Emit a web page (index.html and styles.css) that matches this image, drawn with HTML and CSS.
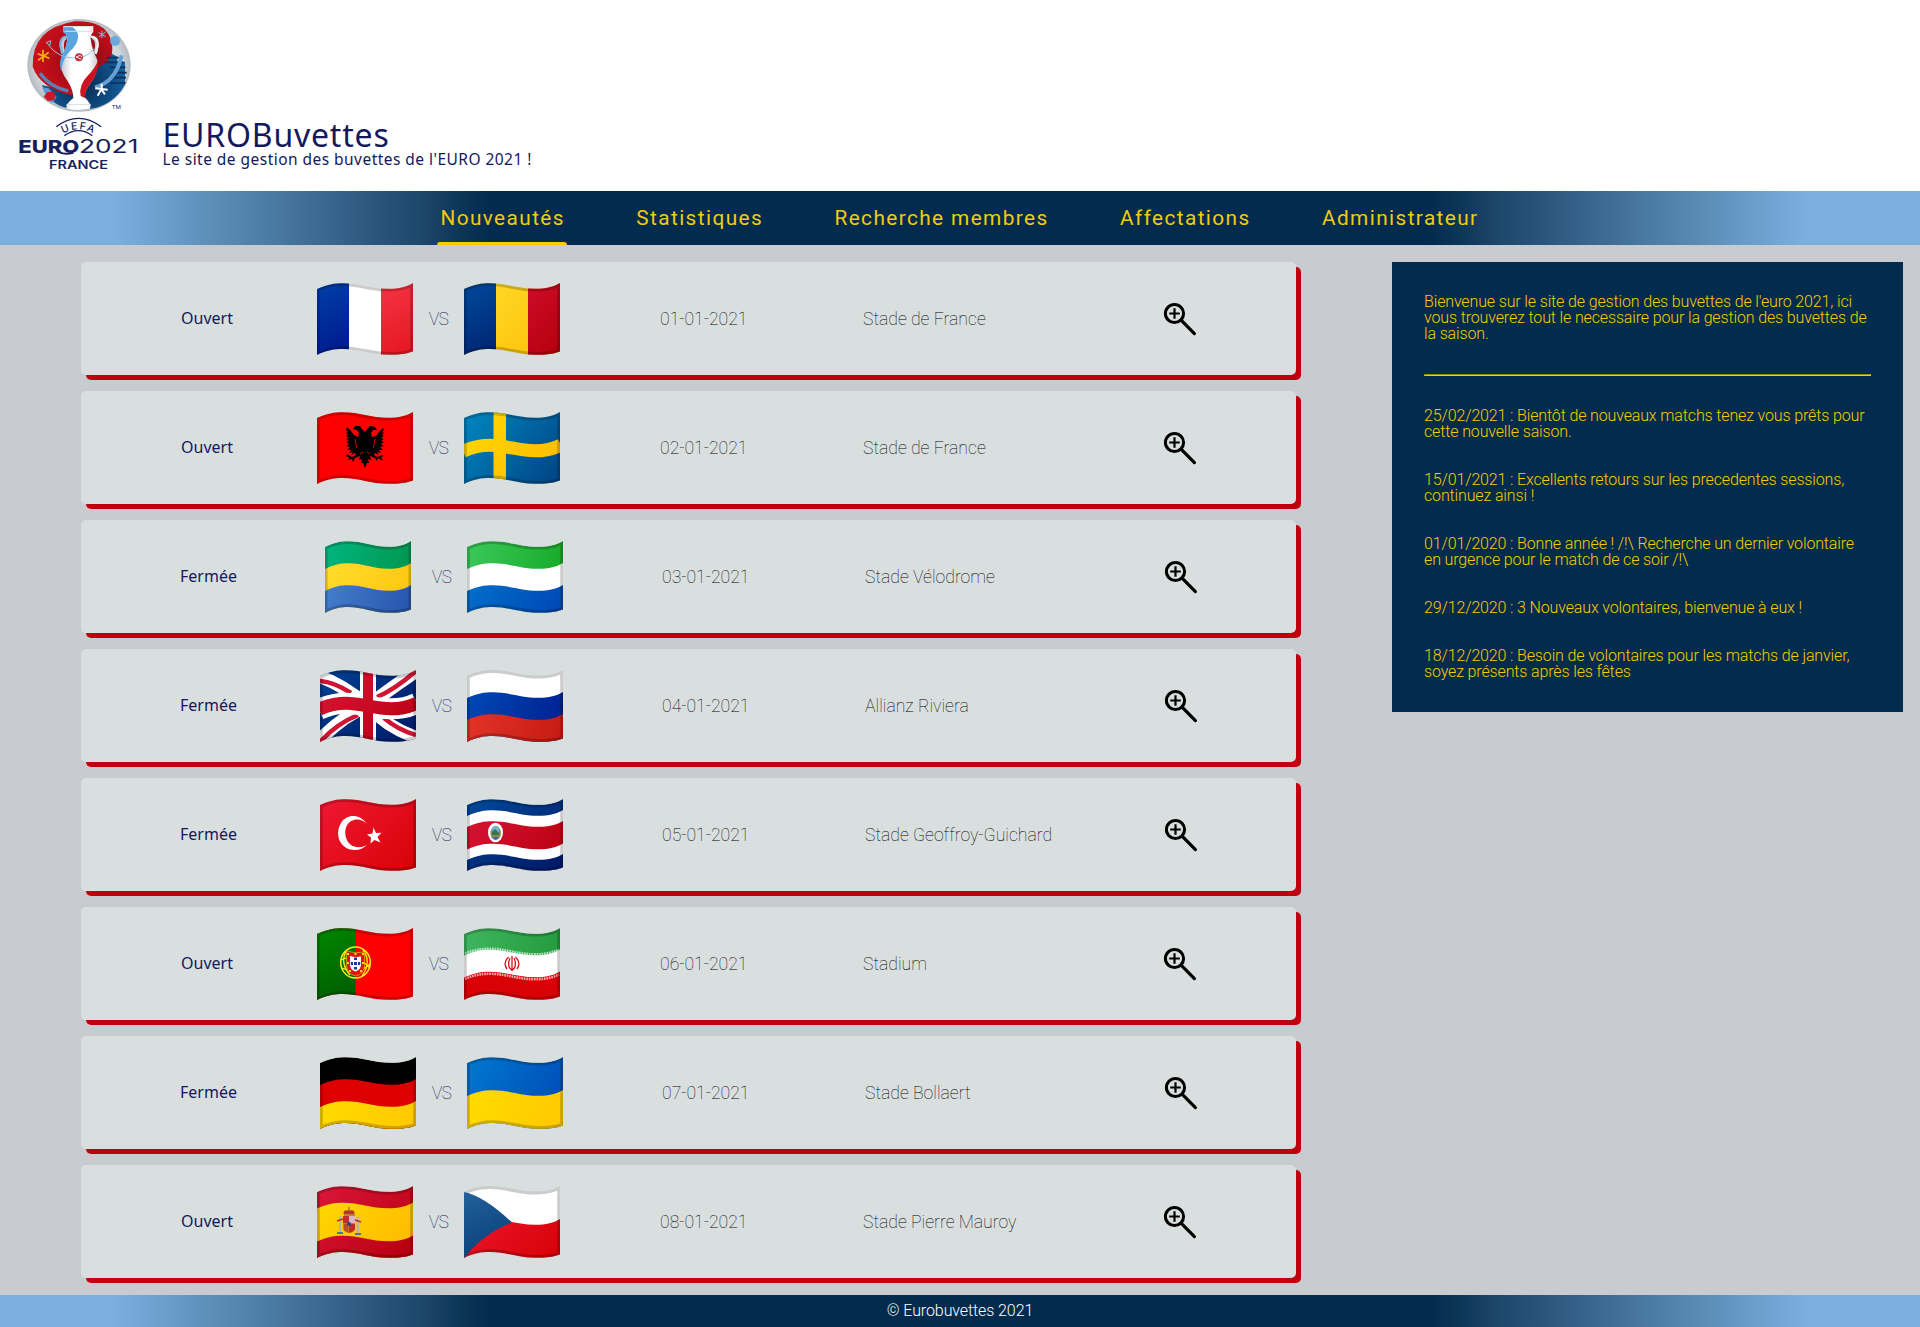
FILE: index.html
```html
<!DOCTYPE html>
<html lang="fr">
<head>
<meta charset="utf-8">
<title>EUROBuvettes</title>
<link rel="stylesheet" href="styles.css">
</head>
<body>
<svg class="defs" width="0" height="0" aria-hidden="true">
  <defs>
    <path id="wave" d="M0 6C10 1.5 17 .3 26 .3C42 .3 54 5.8 71 5.8C82 5.8 90 3.6 96 0V90H0Z"/>
    <path id="sheet" d="M0 6C10 1.5 17 .3 26 .3C42 .3 54 5.8 71 5.8C82 5.8 90 3.6 96 0V68.5C90 71 82 71.8 71 71.8C54 71.8 42 66 26 66C17 66 10 67 0 72Z"/>
    <clipPath id="cut"><use href="#sheet"/></clipPath>
    <use id="edge" href="#sheet" fill="none" stroke="#000" stroke-opacity=".2" stroke-width="5.6"/>
    <linearGradient id="navy" gradientUnits="userSpaceOnUse" x1="10" y1="0" x2="86" y2="72"><stop stop-color="#003f8f"/><stop offset="1" stop-color="#001b69"/></linearGradient>
    <linearGradient id="navyL" gradientUnits="userSpaceOnUse" x1="0" y1="0" x2="40" y2="72"><stop stop-color="#004a9c"/><stop offset="1" stop-color="#00216f"/></linearGradient>
    <linearGradient id="royal" gradientUnits="userSpaceOnUse" x1="0" y1="0" x2="40" y2="72"><stop stop-color="#0040a8"/><stop offset="1" stop-color="#001489"/></linearGradient>
    <linearGradient id="rusBlue" gradientUnits="userSpaceOnUse" x1="0" y1="10" x2="96" y2="60"><stop stop-color="#004cb8"/><stop offset="1" stop-color="#001e90"/></linearGradient>
    <linearGradient id="azure" gradientUnits="userSpaceOnUse" x1="0" y1="0" x2="96" y2="60"><stop stop-color="#0079d0"/><stop offset="1" stop-color="#0049b5"/></linearGradient>
    <linearGradient id="sweBlue" gradientUnits="userSpaceOnUse" x1="0" y1="0" x2="90" y2="72"><stop stop-color="#0087c1"/><stop offset="1" stop-color="#004585"/></linearGradient>
    <linearGradient id="gabBlue" gradientUnits="userSpaceOnUse" x1="0" y1="40" x2="96" y2="72"><stop stop-color="#447fcd"/><stop offset="1" stop-color="#2754ad"/></linearGradient>
    <linearGradient id="czBlue" gradientUnits="userSpaceOnUse" x1="0" y1="6" x2="30" y2="72"><stop stop-color="#22629c"/><stop offset="1" stop-color="#083d77"/></linearGradient>
    <linearGradient id="coral" gradientUnits="userSpaceOnUse" x1="60" y1="0" x2="96" y2="72"><stop stop-color="#f53547"/><stop offset="1" stop-color="#e41620"/></linearGradient>
    <linearGradient id="crimson" gradientUnits="userSpaceOnUse" x1="10" y1="0" x2="86" y2="72"><stop stop-color="#d91536"/><stop offset="1" stop-color="#b80010"/></linearGradient>
    <linearGradient id="scarlet" gradientUnits="userSpaceOnUse" x1="10" y1="0" x2="86" y2="72"><stop stop-color="#ee1730"/><stop offset="1" stop-color="#d80309"/></linearGradient>
    <linearGradient id="brick" gradientUnits="userSpaceOnUse" x1="0" y1="40" x2="96" y2="72"><stop stop-color="#e33428"/><stop offset="1" stop-color="#c51a12"/></linearGradient>
    <linearGradient id="gold" gradientUnits="userSpaceOnUse" x1="10" y1="0" x2="86" y2="72"><stop stop-color="#ffdc29"/><stop offset="1" stop-color="#fdc00a"/></linearGradient>
    <linearGradient id="lemon" gradientUnits="userSpaceOnUse" x1="0" y1="30" x2="96" y2="72"><stop stop-color="#ffdc00"/><stop offset="1" stop-color="#ffc800"/></linearGradient>
    <linearGradient id="amber" gradientUnits="userSpaceOnUse" x1="10" y1="0" x2="86" y2="72"><stop stop-color="#ffd900"/><stop offset="1" stop-color="#ffb900"/></linearGradient>
    <linearGradient id="jade" gradientUnits="userSpaceOnUse" x1="0" y1="0" x2="96" y2="30"><stop stop-color="#00b680"/><stop offset="1" stop-color="#00964f"/></linearGradient>
    <linearGradient id="lime" gradientUnits="userSpaceOnUse" x1="0" y1="0" x2="96" y2="30"><stop stop-color="#3bc95b"/><stop offset="1" stop-color="#17aa28"/></linearGradient>
    <linearGradient id="iranGreen" gradientUnits="userSpaceOnUse" x1="0" y1="0" x2="96" y2="30"><stop stop-color="#40b661"/><stop offset="1" stop-color="#239a3b"/></linearGradient>
    <linearGradient id="forest" gradientUnits="userSpaceOnUse" x1="0" y1="0" x2="40" y2="72"><stop stop-color="#008800"/><stop offset="1" stop-color="#005a00"/></linearGradient>
    <symbol id="loupe" viewBox="0 0 34 34">
      <circle cx="11.5" cy="11.5" r="9.1" fill="none" stroke="#000" stroke-width="3"/>
      <path d="M11.5 6.2V16.8M6.2 11.5H16.8" stroke="#000" stroke-width="2.2" fill="none"/>
      <path d="M18.6 18.6L31.4 31.6" stroke="#000" stroke-width="3.2" stroke-linecap="round" fill="none"/>
    </symbol>
  </defs>
</svg>

<header class="banner">
  <svg class="logo" viewBox="0 0 420 510" role="img" aria-label="UEFA EURO 2021 France">
    <defs>
      <radialGradient id="rim"><stop offset=".8" stop-color="#d3d8dd"/><stop offset="1" stop-color="#b4bbc1"/></radialGradient>
      <linearGradient id="cup"><stop stop-color="#bfc5cb"/><stop offset=".3" stop-color="#fff"/><stop offset=".75" stop-color="#fff"/><stop offset="1" stop-color="#c9cdd2"/></linearGradient>
      <radialGradient id="sea" gradientUnits="userSpaceOnUse" cx="215" cy="220" r="150"><stop stop-color="#0c2448"/><stop offset=".55" stop-color="#0e4a80"/><stop offset="1" stop-color="#1768a8"/></radialGradient>
      <radialGradient id="wine" gradientUnits="userSpaceOnUse" cx="215" cy="150" r="150"><stop stop-color="#6b0d16"/><stop offset=".55" stop-color="#b30d17"/><stop offset="1" stop-color="#cd111b"/></radialGradient>
      <clipPath id="ball"><ellipse cx="207" cy="166" rx="152" ry="136"/></clipPath>
      <path id="arc" d="M150 377Q206 340 262 377"/>
    </defs>
    <ellipse cx="207" cy="166" rx="155" ry="139" fill="url(#rim)"/>
    <g clip-path="url(#ball)">
      <path d="M95 225L185 245L250 170L300 128L322 140V155H345V240Q310 292 215 300Q150 298 122 268Z" fill="url(#sea)"/>
      <path d="M68 170Q64 55 195 34Q280 32 300 82Q318 130 290 158Q262 170 250 185L185 256Q92 236 68 170Z" fill="url(#wine)"/>
      <path d="M290 143H326M284 157H340M300 172H346M305 188H350M290 203H348M300 219H350" stroke="#0d2f58" stroke-width="5"/>
      <path d="M335 136Q318 215 255 232" fill="none" stroke="#659fd3" stroke-width="12"/>
      <path d="M90 190Q120 232 175 243" fill="none" stroke="#5c80b6" stroke-width="10"/>
      <path d="M96 232Q108 262 125 280L140 262L116 235Z" fill="#5b9bd6"/>
    </g>
    <path d="M108 98L122 92L120 106Z" fill="none" stroke="#8fb9df" stroke-width="3"/>
    <circle cx="315" cy="93" r="15" fill="#6aa8de"/>
    <path d="M101 260L112 246L129 245L138 256L132 270L114 274Z" fill="#c81a22"/>
    <path d="M168 82Q150 92 160 128M248 82Q268 92 256 128" fill="none" stroke="#c5cdd4" stroke-width="10"/>
    <path d="M160 48H250V66Q242 72 242 86Q245 115 262 150Q266 190 240 222Q222 246 224 262Q234 272 242 285L240 296Q207 304 170 296L169 285Q178 273 190 264Q190 240 174 215Q144 178 154 142Q168 120 172 88Q172 74 160 66Z" fill="url(#cup)"/>
    <path d="M160 50H186Q208 65 204 84Q200 108 178 125Q157 148 154 185Q146 160 154 142Q168 120 172 88Q172 74 160 66Z" fill="#5aa5df"/>
    <path d="M265 150Q267 190 240 222Q222 246 226 265L212 258Q205 225 235 195Q253 178 265 150Z" fill="#cc1420"/>
    <path d="M172 80Q151 80 151 106L157 132" fill="none" stroke="#77b3e3" stroke-width="7"/>
    <path d="M243 80Q264 80 263 106L257 132" fill="none" stroke="#eceff2" stroke-width="7"/>
    <path d="M162 50H249M164 64H246M170 284H242" stroke="#d7dde2" stroke-width="3"/>
    <path d="M116 106Q145 145 197 144Q235 142 252 116" fill="none" stroke="#8fc3ea" stroke-width="3"/>
    <circle cx="207" cy="142" r="12" fill="#c92b3d"/><path d="M199 144Q207 132 216 140M199 139Q208 148 214 147" fill="none" stroke="#fff" stroke-width="3"/>
    <path d="M99 120V156M83 131L118 145M116 127L84 151" stroke="#f6b60f" stroke-width="5"/>
    <path d="M276 62V84M266 68L287 80M287 66L267 81" stroke="#94bce4" stroke-width="3"/>
    <path d="M275 221V240M256 235L293 239M274 238L263 257M274 238L285 253" stroke="#fff" stroke-width="6"/>
    <text x="305" y="298" textLength="28" lengthAdjust="spacingAndGlyphs" class="logo-tm">TM</text>
    <path d="M139 350Q206 300 273 350M163 377Q206 347 247 377" fill="none" stroke="#171f5c" stroke-width="4"/>
    <text class="logo-uefa"><textPath href="#arc" startOffset="50%">UEFA</textPath></text>
    <text x="25" y="429" textLength="183" lengthAdjust="spacingAndGlyphs" class="logo-euro">EURO</text>
    <path d="M150 428Q166 434 190 428" fill="none" stroke="#171f5c" stroke-width="6"/>
    <text x="207" y="429" textLength="178" lengthAdjust="spacingAndGlyphs" class="logo-year">2021</text>
    <text x="117" y="476" textLength="177" lengthAdjust="spacingAndGlyphs" class="logo-france">FRANCE</text>
  </svg>
  <div class="titles">
    <h1>EUROBuvettes</h1>
    <p>Le site de gestion des buvettes de l'EURO 2021 !</p>
  </div>
</header>

<nav class="menu">
  <a class="active">Nouveautés</a>
  <a>Statistiques</a>
  <a>Recherche membres</a>
  <a>Affectations</a>
  <a>Administrateur</a>
</nav>

<main>
  <section class="matches">
    <article class="match">
      <span class="status">Ouvert</span>
      <div class="teams">
        <svg class="flag" viewBox="0 0 96 72"><g clip-path="url(#cut)"><path fill="#fff" d="M0 0H96V72H0Z"/><path fill="url(#royal)" d="M0 0H32V72H0Z"/><path fill="url(#coral)" d="M64 0H96V72H64Z"/><use href="#edge"/></g></svg>
        <span class="vs">VS</span>
        <svg class="flag" viewBox="0 0 96 72"><g clip-path="url(#cut)"><path fill="url(#gold)" d="M0 0H96V72H0Z"/><path fill="url(#navyL)" d="M0 0H32V72H0Z"/><path fill="url(#crimson)" d="M64 0H96V72H64Z"/><use href="#edge"/></g></svg>
      </div>
      <span class="info">01-01-2021</span><span class="info">Stade de France</span>
      <svg class="loupe"><use href="#loupe"/></svg>
    </article>
    <article class="match">
      <span class="status">Ouvert</span>
      <div class="teams">
        <svg class="flag" viewBox="0 0 96 72"><g clip-path="url(#cut)"><path fill="#f00" d="M0 0H96V72H0Z"/>
          <path d="M48 20L45 17L43 14L38 14L36 17L40 18L42 21L41 25L37 23L34 19L30 15L29 18L31 20L29 21L31 23L29 24L32 26L29 27L32 29L29 30L32 32L29 34L33 35L30 38L34 38L32 41L36 40L34 43L38 41L39 43L35 45L30 42L29 44L33 46L30 48L35 47L36 50L38 46L43 44L42 48L45 47L44 51L46 51L48 56L50 51L52 51L51 47L54 48L53 44L58 46L60 49L61 46L66 49L64 45L67 44L65 43L60 45L57 43L58 41L62 43L60 40L64 41L62 38L66 38L63 35L67 34L64 32L67 30L64 29L67 27L64 26L67 24L65 23L67 21L65 20L67 18L66 16L62 20L59 24L55 25L54 21L56 18L60 18L58 15L53 14L50 17Z"/><path d="M38 27L39.500 36M58 27L56.500 36M43 42L46 40M53 42L50 40" stroke="#f00" stroke-width=".9"/><use href="#edge"/></g></svg>
        <span class="vs">VS</span>
        <svg class="flag" viewBox="0 0 96 72"><g clip-path="url(#cut)"><path fill="url(#sweBlue)" d="M0 0H96V72H0Z"/><path d="M-1 39.300C10 34.5 17 33.3 26 33.3C42 33.3 54 38.8 71 38.8C82 38.8 90 36.6 97 33" fill="none" stroke="url(#amber)" stroke-width="13"/><path fill="url(#amber)" d="M29.5 0H42V72H29.5Z"/><use href="#edge"/></g></svg>
      </div>
      <span class="info">02-01-2021</span><span class="info">Stade de France</span>
      <svg class="loupe"><use href="#loupe"/></svg>
    </article>
    <article class="match closed">
      <span class="status">Fermée</span>
      <div class="teams">
        <svg class="flag narrow" viewBox="0 0 96 72" preserveAspectRatio="none"><g clip-path="url(#cut)"><use href="#wave" fill="url(#jade)"/><use href="#wave" y="22" fill="url(#gold)"/><path fill="url(#gabBlue)" d="M0 50C10 45.5 17 44.3 26 44.3C42 44.3 54 49.8 71 49.8C82 49.8 90 47.6 96 44V80H0Z"/><use href="#edge"/></g></svg>
        <span class="vs">VS</span>
        <svg class="flag" viewBox="0 0 96 72"><g clip-path="url(#cut)"><use href="#wave" fill="url(#lime)"/><use href="#wave" y="22" fill="#fff"/><path fill="url(#azure)" d="M0 50C10 45.5 17 44.3 26 44.3C42 44.3 54 49.8 71 49.8C82 49.8 90 47.6 96 44V80H0Z"/><use href="#edge"/></g></svg>
      </div>
      <span class="info">03-01-2021</span><span class="info">Stade Vélodrome</span>
      <svg class="loupe"><use href="#loupe"/></svg>
    </article>
    <article class="match closed">
      <span class="status">Fermée</span>
      <div class="teams">
        <svg class="flag" viewBox="0 0 96 72"><g clip-path="url(#cut)"><path fill="url(#navy)" d="M0 0H96V72H0Z"/>
          <path d="M-2 6Q22 14 48 36Q68 20 98 0M-2 72Q22 46 48 36Q68 58 98 68" fill="none" stroke="#fff" stroke-width="13"/>
          <path d="M0 11Q14 12 31 23M57 27Q74 20 96 1M0 72Q16 54 38 45M64 48Q78 60 96 65" fill="none" stroke="#cf1434" stroke-width="4.5"/>
          <path d="M-1 39.300C10 34.5 17 33.3 26 33.3C42 33.3 54 38.8 71 38.8C82 38.8 90 36.6 97 33" fill="none" stroke="#fff" stroke-width="21"/><path fill="#fff" d="M40 0H56V72H40Z"/>
          <path d="M-1 39.300C10 34.5 17 33.3 26 33.3C42 33.3 54 38.8 71 38.8C82 38.8 90 36.6 97 33" fill="none" stroke="url(#crimson)" stroke-width="13"/><path fill="url(#crimson)" d="M43 0H53V72H43Z"/><use href="#edge"/></g></svg>
        <span class="vs">VS</span>
        <svg class="flag" viewBox="0 0 96 72"><g clip-path="url(#cut)"><use href="#wave" fill="#fff"/><path fill="url(#rusBlue)" d="M0 28C10 23.5 17 22.3 26 22.3C42 22.3 54 27.8 71 27.8C82 27.8 90 25.6 96 22V80H0Z"/><path fill="url(#brick)" d="M0 50C10 45.5 17 44.3 26 44.3C42 44.3 54 49.8 71 49.8C82 49.8 90 47.6 96 44V80H0Z"/><use href="#edge"/></g></svg>
      </div>
      <span class="info">04-01-2021</span><span class="info">Allianz Riviera</span>
      <svg class="loupe"><use href="#loupe"/></svg>
    </article>
    <article class="match closed">
      <span class="status">Fermée</span>
      <div class="teams">
        <svg class="flag" viewBox="0 0 96 72"><g clip-path="url(#cut)"><path fill="url(#scarlet)" d="M0 0H96V72H0Z"/><path fill="#fff" d="M46.5 24.5C40 15 27 14.500 21 24C15 34 18.500 47 30 50.500C37 52 43 50 47 46C40 49.500 32 49 28 43C23.500 36 24.500 26 31 22C36.500 19 42 20.500 46.500 24.500Z"/><path fill="#fff" d="M53.500 28.500L56 34L61.500 33.700L57.500 38L60.500 43.500L54.500 41L50.500 44.500L51 38.500L47 35.500L52.500 34.500Z"/><use href="#edge"/></g></svg>
        <span class="vs">VS</span>
        <svg class="flag" viewBox="0 0 96 72"><g clip-path="url(#cut)"><use href="#wave" fill="url(#navyL)"/><use href="#wave" y="11" fill="#fff"/><path fill="url(#crimson)" d="M0 28C10 23.5 17 22.3 26 22.3C42 22.3 54 27.8 71 27.8C82 27.8 90 25.6 96 22V80H0Z"/><use href="#wave" y="44.500" fill="#fff"/><path fill="url(#navy)" d="M0 61C10 56.500 17 55.300 26 55.300C42 55.300 54 60.800 71 60.800C82 60.800 90 58.600 96 55V90H0Z"/>
          <ellipse cx="28.500" cy="33.500" rx="7.500" ry="9.800" fill="#fff"/><ellipse cx="28.700" cy="34" rx="5.300" ry="7" fill="#8b8c55"/><path d="M25 29Q28.500 26 32 29V35H25Z" fill="#65b7d8"/><path d="M25 33L28 30L32 34V36H25Z" fill="#39734c"/><path d="M25 38H32L28.500 41Z" fill="#3265a8"/><use href="#edge"/></g></svg>
      </div>
      <span class="info">05-01-2021</span><span class="info">Stade Geoffroy-Guichard</span>
      <svg class="loupe"><use href="#loupe"/></svg>
    </article>
    <article class="match">
      <span class="status">Ouvert</span>
      <div class="teams">
        <svg class="flag" viewBox="0 0 96 72"><g clip-path="url(#cut)"><path fill="#f00" d="M0 0H96V72H0Z"/><path fill="url(#forest)" d="M0 0H38.500V72H0Z"/>
          <ellipse cx="38.500" cy="34.500" rx="14.800" ry="15.500" fill="none" stroke="#ffee1a" stroke-width="1.500"/><path d="M24 32Q38 24 53 40M25 40Q40 48 53 36M30 22Q22 34 33 47M46 22Q55 34 45 48" fill="none" stroke="#ffee1a" stroke-width="1.300"/>
          <path d="M29.500 23Q38 26 47.500 24V38Q47 46 38.500 48Q30 46 29.500 38Z" fill="#e01313" stroke="#d9c200" stroke-width=".7"/><path d="M33 28Q38 29.500 44 28.500V37Q43.500 42 38.500 43.500Q33.500 42 33 37Z" fill="#fff"/>
          <path d="M37 29.500H40V32H37ZM37 34H40V37H37ZM37 39H40V41.500H37ZM33.800 34H36V37H33.800ZM41 34H43.200V37H41Z" fill="#173b9b"/><path d="M30 25H32V27H30ZM37.500 25H39.500V27H37.500ZM45 25H47V27H45ZM30 34H32V36H30ZM45 34H47V36H45ZM32 42H34V44H32ZM43 42H45V44H43Z" fill="#f4da20"/><use href="#edge"/></g></svg>
        <span class="vs">VS</span>
        <svg class="flag" viewBox="0 0 96 72"><g clip-path="url(#cut)"><use href="#wave" fill="url(#iranGreen)"/><use href="#wave" y="21.500" fill="#fff"/><use href="#wave" y="43.500" fill="#d90006"/>
          <path d="M1 25.500C10 22 17 20.800 26 20.800C42 20.800 54 26.300 71 26.300C82 26.300 90 24.100 95 21.500M1 51C10 47 17 45.800 26 45.800C42 45.800 54 51.300 71 51.300C82 51.300 90 49.100 95 46.500" fill="none" stroke="#fff" stroke-opacity=".65" stroke-width="2.600" stroke-dasharray="1.700 .8"/>
          <path d="M48 28V43M44.500 29Q38.500 35 43 41M51.500 29Q57.500 35 53 41M46 30Q42.500 38 47.500 42M50 30Q53.500 38 48.500 42" fill="none" stroke="#da1016" stroke-width="1.300"/><use href="#edge"/></g></svg>
      </div>
      <span class="info">06-01-2021</span><span class="info">Stadium</span>
      <svg class="loupe"><use href="#loupe"/></svg>
    </article>
    <article class="match closed">
      <span class="status">Fermée</span>
      <div class="teams">
        <svg class="flag" viewBox="0 0 96 72"><g clip-path="url(#cut)"><use href="#wave" fill="#000"/><use href="#wave" y="22" fill="#dd0000"/><path fill="url(#lemon)" d="M0 50C10 45.5 17 44.3 26 44.3C42 44.3 54 49.8 71 49.8C82 49.8 90 47.6 96 44V80H0Z"/><use href="#edge"/></g></svg>
        <span class="vs">VS</span>
        <svg class="flag" viewBox="0 0 96 72"><g clip-path="url(#cut)"><use href="#wave" fill="url(#azure)"/><path fill="url(#lemon)" d="M0 39C10 34.5 17 33.3 26 33.3C42 33.3 54 38.8 71 38.8C82 38.8 90 36.6 96 33V80H0Z"/><use href="#edge"/></g></svg>
      </div>
      <span class="info">07-01-2021</span><span class="info">Stade Bollaert</span>
      <svg class="loupe"><use href="#loupe"/></svg>
    </article>
    <article class="match">
      <span class="status">Ouvert</span>
      <div class="teams">
        <svg class="flag" viewBox="0 0 96 72"><g clip-path="url(#cut)"><use href="#wave" fill="url(#crimson)"/><path fill="url(#amber)" d="M0 22.500C10 18 17 16.800 26 16.800C42 16.800 54 22.300 71 22.300C82 22.300 90 20.100 96 16.500V80H0Z"/><path fill="url(#crimson)" d="M0 55.500C10 51 17 49.800 26 49.800C42 49.800 54 55.300 71 55.300C82 55.300 90 53.100 96 49.500V90H0Z"/>
          <path d="M22 30H24.500V46H22ZM39.500 31H42V47H39.500Z" fill="#b9b7a0"/><path d="M20 35L26 33M38 34L44 36" stroke="#c4283a" stroke-width="1.500"/><path d="M20 47H26M38 48H44" stroke="#467a9b" stroke-width="1.800"/><path d="M26.500 28Q26 23 32 24.500Q38 23 37.500 28Z" fill="#b5372b"/><path d="M32 21V25M27 29H38" stroke="#9b7430" stroke-width="1.400"/>
          <path d="M26 30H32V37.500H26Z" fill="#c42b30"/><path d="M32 30H38V37.500H32Z" fill="#dcb7c4"/><path d="M26 37.500H32V47Q27 46 26 43Z" fill="#b58023"/><path d="M32 37.500H38V43Q37 46 32 47Z" fill="#c32a2b"/><path d="M28 38V45M30 38V46" stroke="#bb2025" stroke-width="1"/><circle cx="32" cy="38" r="2" fill="#2d4386"/><use href="#edge"/></g></svg>
        <span class="vs">VS</span>
        <svg class="flag" viewBox="0 0 96 72"><g clip-path="url(#cut)"><use href="#wave" fill="#fff"/><path fill="url(#scarlet)" d="M0 39C10 34.5 17 33.3 26 33.3C42 33.3 54 38.8 71 38.8C82 38.8 90 36.6 96 33V80H0Z"/><use href="#edge"/><path fill="url(#czBlue)" d="M0 6Q20 10 48 36.500Q20 47 0 72Z"/></g></svg>
      </div>
      <span class="info">08-01-2021</span><span class="info">Stade Pierre Mauroy</span>
      <svg class="loupe"><use href="#loupe"/></svg>
    </article>
  </section>

  <aside class="news">
    <p>Bienvenue sur le site de gestion des buvettes de l'euro 2021, ici vous trouverez tout le necessaire pour la gestion des buvettes de la saison.</p>
    <hr>
    <p>25/02/2021 : Bientôt de nouveaux matchs tenez vous prêts pour cette nouvelle saison.</p>
    <p>15/01/2021 : Excellents retours sur les precedentes sessions, continuez ainsi !</p>
    <p>01/01/2020 : Bonne année ! /!\ Recherche un dernier volontaire en urgence pour le match de ce soir /!\</p>
    <p>29/12/2020 : 3 Nouveaux volontaires, bienvenue à eux !</p>
    <p>18/12/2020 : Besoin de volontaires pour les matchs de janvier, soyez présents après les fêtes</p>
  </aside>
</main>

<footer class="footer">© Eurobuvettes 2021</footer>
</body>
</html>
```

FILE: styles.css
```css
* { box-sizing: border-box; margin: 0; padding: 0; }

body {
  background: #c8cbd0;
  font-family: Roboto, "Liberation Sans", sans-serif;
  font-weight: 300;
  line-height: 1;
}

.defs { display: block; }

.banner {
  display: flex;
  height: 191px;
  padding: 10px;
  gap: 12.5px;
  background: #fff;
  color: #13195b;
}
.logo { width: 140px; height: 170px; flex: none; }
.logo text { fill: #171f5c; font-family: Inter, sans-serif; }
.logo-tm { font-size: 14px; font-weight: 400; }
.logo .logo-uefa { font-size: 31px; font-weight: 500; letter-spacing: 5px; text-anchor: middle; }
.logo-euro { font-size: 54px; font-weight: 800; }
.logo-year { font-size: 54px; font-weight: 400; }
.logo-france { font-size: 35px; font-weight: 600; }

.titles { padding-top: 109px; font-family: "Noto Sans", sans-serif; font-weight: 400; }
.titles h1 { font-size: 32px; font-weight: 400; line-height: 32px; letter-spacing: 0.8px; }
.titles p { font-size: 15.5px; line-height: 16px; letter-spacing: 0.46px; }

.menu, .footer {
  background: linear-gradient(90deg, #7aafde 0, #7aafde 6%, #1b4468 22.3%, #0c3656 24%, #032b4e 25.5%, #032b4e 74.5%, #0c3656 76%, #1b4468 77.7%, #7aafde 94%, #7aafde 100%);
}
.menu {
  display: flex;
  justify-content: center;
  gap: 67.4px;
  height: 54px;
  padding-right: 3px;
}
.menu a {
  padding: 0 1px 0 3px;
  color: #f2cb0c;
  font-size: 20.8px;
  font-weight: 400;
  letter-spacing: 1.4px;
  line-height: 55px;
  height: 54px;
}
.menu .active { position: relative; }
.menu .active::after {
  content: "";
  position: absolute;
  inset: auto -1px 0 0;
  height: 3px;
  background: #f7cd00;
  border-radius: 3px 3px 0 0;
}

main {
  display: flex;
  justify-content: space-between;
  align-items: flex-start;
  padding: 17px 17px 17px 81px;
}
.matches { display: flex; flex-direction: column; gap: 16px; width: 1215px; }
.match {
  display: grid;
  grid-template-columns: 136px 343px 203px 300px auto;
  align-items: center;
  height: 113px;
  padding-left: 100px;
  border-radius: 5px;
  background: #d9dfdf;
  box-shadow: 5px 5px 0 #bf000f;
}
.match.closed { grid-template-columns: 140px 342px 203px 299px auto; padding-left: 99px; }
.status { padding-bottom: 1px; color: #13195b; font-family: "Noto Sans", sans-serif; font-size: 16px; font-weight: 400; }
.teams { display: flex; align-items: center; }
.flag { width: 96px; height: 72px; }
.flag.narrow { width: 86px; margin: 0 5px; }
.vs { width: 51px; padding-top: 2px; text-align: center; font-size: 17.6px; font-weight: 250; letter-spacing: -0.6px; color: #13195b; }
.info { padding-top: 2px; font-size: 17.6px; font-weight: 100; color: #000; white-space: nowrap; }
.loupe { width: 34px; height: 34px; }

.news {
  display: flex;
  flex-direction: column;
  gap: 32px;
  width: 511px;
  padding: 32px;
  background: #032b4e;
  color: #f7cd00;
  font-size: 16px;
  line-height: 16px;
  letter-spacing: -0.14px;
}
.news hr { border: 1px inset #f7cd00; }

.footer {
  height: 32px;
  color: #fff;
  font-size: 16px;
  line-height: 32px;
  letter-spacing: -0.1px;
  text-align: center;
}
```
